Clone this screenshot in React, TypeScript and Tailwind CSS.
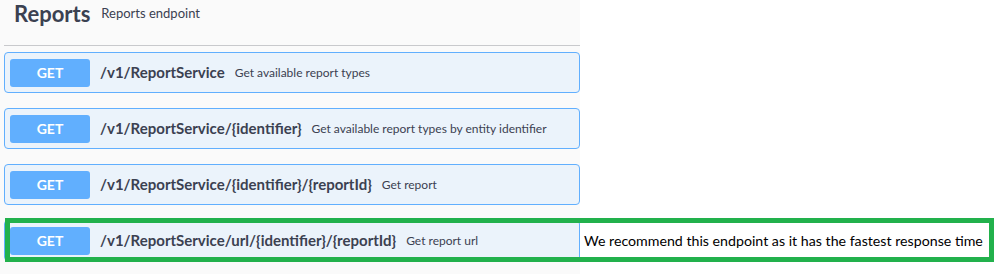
const ROWS = [
  { path: "/v1/ReportService", summary: "Get available report types" },
  {
    path: "/v1/ReportService/{identifier}",
    summary: "Get available report types by entity identifier",
  },
  {
    path: "/v1/ReportService/{identifier}/{reportId}",
    summary: "Get report",
  },
  {
    path: "/v1/ReportService/url/{identifier}/{reportId}",
    summary: "Get report url",
    note: "We recommend this endpoint as it has the fastest response time",
  },
];

function Operation({ path, summary }: { path: string; summary: string }) {
  return (
    <div className="ml-1 flex h-[41px] w-[576px] items-center rounded-[4px] border border-[#61affe] bg-[#ebf3fb] px-[5px]">
      <span className="flex h-[28px] w-[80px] items-center justify-center rounded-[3px] bg-[#61affe] text-[14px] font-bold text-white">
        GET
      </span>
      <span className="ml-[10px] text-[15px] font-bold text-[#3b4151]">
        {path}
      </span>
      <span className="ml-[10px] text-[12px] text-[#3b4151]">{summary}</span>
    </div>
  );
}

export default function App() {
  return (
    <div className="flex h-[274px] w-[1000px] flex-col bg-white font-['Lato',sans-serif]">
      <div className="h-[52px] w-[580px] shrink-0 bg-[#fafafa] pl-1">
        <div className="flex h-[46px] items-start border-b border-[#c8c9cc] pl-[10px]">
          <h2 className="text-[22px] leading-[28px] font-bold text-[#3b4151]">
            Reports
          </h2>
          <span className="mt-[4px] ml-[11px] text-[13px] text-[#3b4151]">
            Reports endpoint
          </span>
        </div>
      </div>
      {ROWS.map((row) => (
        <div key={row.path} className="relative flex h-[56px] shrink-0">
          <div className="w-[580px] shrink-0 bg-[#fafafa]">
            <Operation path={row.path} summary={row.summary} />
          </div>
          {row.note && (
            <>
              <div className="flex h-[41px] items-center pl-1 text-[14.2px] text-black">
                {row.note}
              </div>
              <div className="pointer-events-none absolute top-[-2px] left-[5px] h-[44px] w-[989px] border-[5px] border-[#22b14c]" />
            </>
          )}
        </div>
      ))}
      <div className="w-[580px] flex-1 bg-[#fafafa]" />
    </div>
  );
}
